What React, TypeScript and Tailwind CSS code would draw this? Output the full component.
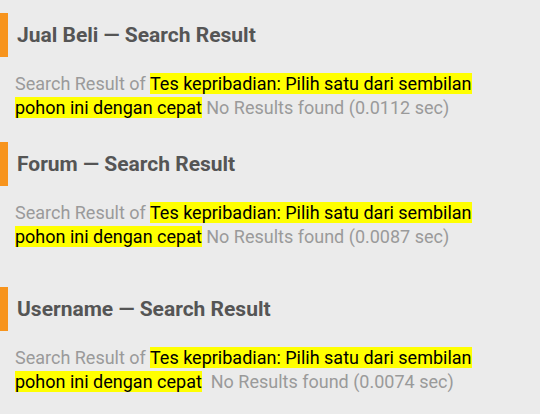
import React from 'react';

const query = 'Tes kepribadian: Pilih satu dari sembilan pohon ini dengan cepat';

const sections = [
  { title: 'Jual Beli', time: '0.0112', gap: 'mt-[13px]' },
  { title: 'Forum', time: '0.0087', gap: 'mt-[22px]' },
  { title: 'Username', time: '0.0074', gap: 'mt-[38px]' },
];

function ResultBlock({ title, time, gap, wide }: { title: string; time: string; gap: string; wide?: boolean }) {
  return (
    <section className={gap}>
      <div className="flex items-center h-[44px] border-l-[8px] border-[#f7941d] pl-[9px]">
        <h2 className="text-[21px] font-bold text-[#555555] leading-none">{title} — Search Result</h2>
      </div>
      <p className="mt-[15px] px-[15px] text-[18px] leading-[24px] text-[#9a9a9a]">
        Search Result of <span className="bg-[#ffff00] text-black">{query}</span>
        {wide ? '\u00a0 ' : ' '}No Results found ({time} sec)
      </p>
    </section>
  );
}

export default function App() {
  return (
    <div className="w-[540px] h-[414px] bg-[#ebebeb] overflow-hidden" style={{ fontFamily: 'Roboto, sans-serif' }}>
      {sections.map((s, i) => (
        <ResultBlock key={s.title} {...s} wide={i === 2} />
      ))}
    </div>
  );
}
